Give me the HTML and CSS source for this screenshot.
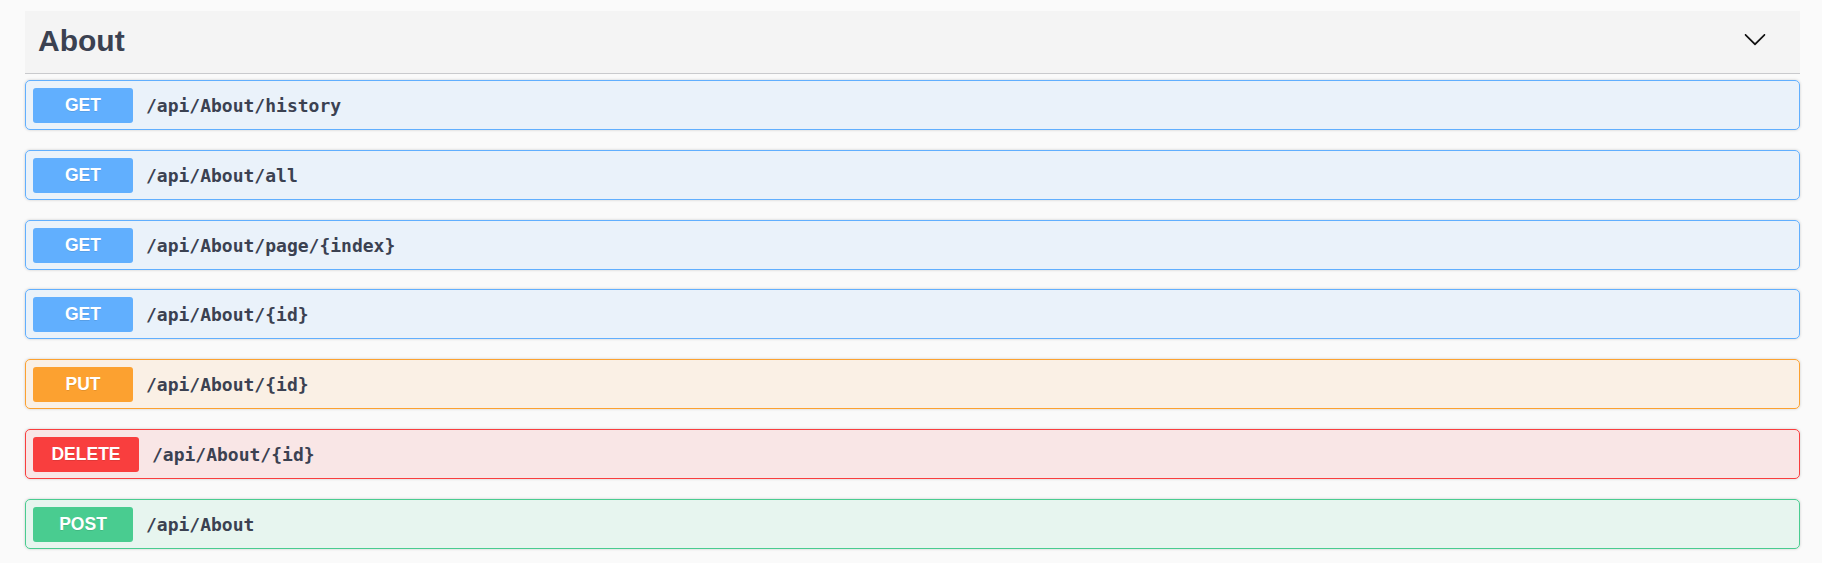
FILE: index.html
```html
<!DOCTYPE html>
<html lang="en">
<head>
<meta charset="utf-8">
<title>About</title>
<link rel="stylesheet" href="styles.css">
</head>
<body>
<div class="wrapper">
  <section class="tag-section">
    <h3 class="tag">
      <span class="tag-name">About</span>
      <svg class="arrow" width="24" height="24" viewBox="0 0 20 20" aria-hidden="true"><path d="M17.418 6.109c.272-.268.709-.268.979 0s.271.701 0 .969l-7.908 7.83c-.27.268-.707.268-.979 0l-7.908-7.830c-.27-.268-.27-.701 0-.969.271-.268.709-.268.979 0L10 13.25l7.418-7.141z"/></svg>
    </h3>
    <div class="ops">
      <div class="opblock get"><span class="method">GET</span><span class="path">/api/About/history</span></div>
      <div class="opblock get"><span class="method">GET</span><span class="path">/api/About/all</span></div>
      <div class="opblock get"><span class="method">GET</span><span class="path">/api/About/page/{index}</span></div>
      <div class="opblock get"><span class="method">GET</span><span class="path">/api/About/{id}</span></div>
      <div class="opblock put"><span class="method">PUT</span><span class="path">/api/About/{id}</span></div>
      <div class="opblock delete"><span class="method wide">DELETE</span><span class="path">/api/About/{id}</span></div>
      <div class="opblock post"><span class="method">POST</span><span class="path">/api/About</span></div>
    </div>
  </section>
</div>
</body>
</html>
```
FILE: styles.css
```css
html, body {
  margin: 0;
  padding: 0;
  background: #fafafa;
}
body {
  font-family: "Liberation Sans", Arial, sans-serif;
  color: #3b4151;
}
.wrapper {
  padding: 11px 22px 0 25px;
}
.tag {
  margin: 0 0 6px;
  height: 63px;
  box-sizing: border-box;
  display: flex;
  align-items: center;
  justify-content: space-between;
  background: #f4f4f4;
  border-bottom: 1px solid #c9cacd;
  padding: 0 33px 2px 13px;
}
.tag-name {
  font-size: 30px;
  font-weight: 700;
  color: #3b4151;
}
.arrow {
  display: block;
  fill: #111;
  margin-top: -4px;
}
.ops {
  display: flex;
  flex-direction: column;
}
.opblock {
  display: flex;
  align-items: center;
  height: 50px;
  box-sizing: border-box;
  padding: 1px 7px 0;
  margin-bottom: 19.8px;
  border: 1px solid;
  border-radius: 5px;
  box-shadow: 0 0 3px rgba(0,0,0,.19);
}
.method {
  width: 100px;
  height: 35px;
  display: flex;
  align-items: center;
  justify-content: center;
  border-radius: 3px;
  color: #fff;
  font-family: "Liberation Sans", Arial, sans-serif;
  font-weight: 700;
  font-size: 17.5px;
  text-shadow: 0 1px 0 rgba(0,0,0,.1);
  flex: none;
}
.method.wide {
  width: 106px;
}
.path {
  margin-left: 13px;
  font-family: "DejaVu Sans Mono", "Liberation Mono", monospace;
  font-weight: 700;
  font-size: 18px;
  color: #3b4151;
}
.get { background: rgba(97,175,254,.1); border-color: #61affe; }
.get .method { background: #61affe; }
.put { background: rgba(252,161,48,.1); border-color: #fca130; }
.put .method { background: #fca130; }
.delete { background: rgba(249,62,62,.1); border-color: #f93e3e; }
.delete .method { background: #f93e3e; }
.post { background: rgba(73,204,144,.1); border-color: #49cc90; }
.post .method { background: #49cc90; }
```
